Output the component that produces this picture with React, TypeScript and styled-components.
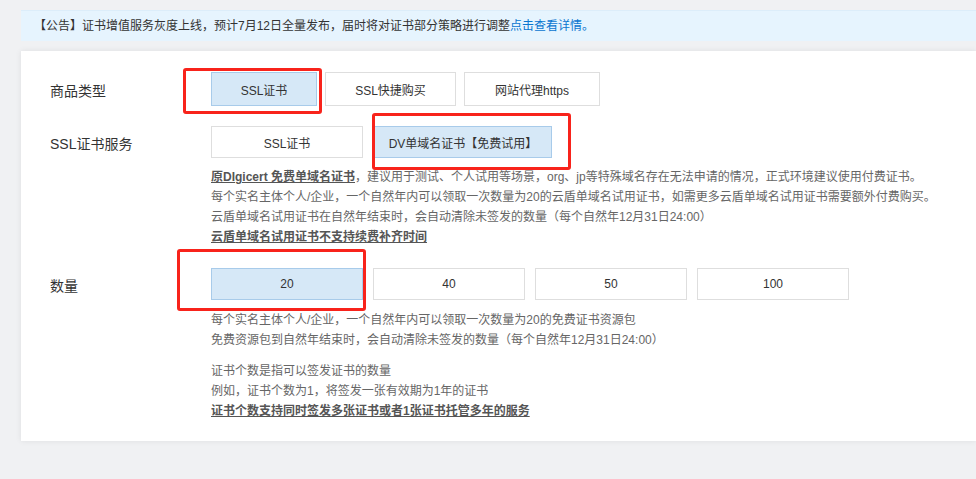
import React from 'react';
import styled, { createGlobalStyle } from 'styled-components';

const GlobalStyle = createGlobalStyle`
  html, body {
    margin: 0;
    padding: 0;
    background: #f0f1f3;
    overflow: hidden;
  }
  body {
    font-family: "Liberation Sans", "Noto Sans CJK SC", sans-serif;
    color: #333;
  }
`;

const Page = styled.div`
  padding: 10px 0 40px 21px;
`;

const Notice = styled.div`
  height: 31px;
  line-height: 31px;
  padding-left: 13px;
  background: #e6f4fe;
  border-top: 1px solid #dcedfa;
  box-sizing: border-box;
  font-size: 12px;
  color: #333;
  white-space: nowrap;
  overflow: hidden;
  a {
    color: #0a76d0;
    text-decoration: none;
  }
`;

const Card = styled.div`
  margin-top: 10px;
  padding: 21px 0 20px 29px;
  background: #fff;
  box-shadow: 0 0 6px rgba(0, 0, 0, 0.08);
  overflow: hidden;
`;

const Row = styled.div<{ $gap?: number }>`
  display: flex;
  align-items: flex-start;
  margin-top: ${({ $gap }) => ($gap ?? 0)}px;
`;

const Label = styled.div<{ $h: number }>`
  width: 161px;
  flex: none;
  height: ${({ $h }) => $h}px;
  line-height: ${({ $h }) => $h + 4}px;
  font-size: 14px;
  color: #333;
`;

const Field = styled.div`
  display: flex;
  flex-direction: column;
  min-width: 0;
`;

const Options = styled.div<{ $gap: number }>`
  display: flex;
  gap: ${({ $gap }) => $gap}px;
  padding-top: 20px;
  margin-top: -20px;
  padding-left: 40px;
  margin-left: -40px;
  padding-bottom: 14px;
  margin-bottom: -14px;
  padding-right: 20px;
`;

const Slot = styled.div`
  position: relative;
`;

const Option = styled.button<{ $active?: boolean; $w: number; $h: number }>`
  display: block;
  box-sizing: border-box;
  width: ${({ $w }) => $w}px;
  height: ${({ $h }) => $h}px;
  padding: 0;
  font-family: inherit;
  font-size: 12px;
  color: #333;
  background: ${({ $active }) => ($active ? '#d6e8f7' : '#fff')};
  border: 1px solid ${({ $active }) => ($active ? '#a8cbea' : '#dedede')};
  cursor: pointer;
`;

const Mark = styled.span<{ $t: number; $r: number; $b: number; $l: number }>`
  position: absolute;
  top: ${({ $t }) => $t}px;
  right: ${({ $r }) => $r}px;
  bottom: ${({ $b }) => $b}px;
  left: ${({ $l }) => $l}px;
  border: 3px solid #f8231b;
  border-radius: 3px;
  pointer-events: none;
`;

const Desc = styled.div<{ $top: number }>`
  margin-top: ${({ $top }) => $top}px;
  font-size: 12px;
  line-height: 20px;
  color: #666;
  white-space: nowrap;
`;

const Strong = styled.span`
  font-weight: bold;
  color: #555;
  text-decoration: underline;
`;

type Opt = { text: string; w: number; active?: boolean; mark?: [number, number, number, number] };

const OptionGroup: React.FC<{ items: Opt[]; h: number; gap: number }> = ({ items, h, gap }) => (
  <Options $gap={gap}>
    {items.map((o) => (
      <Slot key={o.text}>
        <Option $active={o.active} $w={o.w} $h={h}>
          {o.text}
        </Option>
        {o.mark && <Mark $t={o.mark[0]} $r={o.mark[1]} $b={o.mark[2]} $l={o.mark[3]} />}
      </Slot>
    ))}
  </Options>
);

const App: React.FC = () => {
  return (
    <>
      <GlobalStyle />
      <Page>
        <Notice>
          【公告】证书增值服务灰度上线，预计7月12日全量发布，届时将对证书部分策略进行调整<a href="#">点击查看详情。</a>
        </Notice>
        <Card>
          <Row>
            <Label $h={34}>商品类型</Label>
            <OptionGroup
              h={34}
              gap={8}
              items={[
                { text: 'SSL证书', w: 106, active: true, mark: [-4, -5, -8, -28] },
                { text: 'SSL快捷购买', w: 131 },
                { text: '网站代理https', w: 136 },
              ]}
            />
          </Row>
          <Row $gap={20}>
            <Label $h={32}>SSL证书服务</Label>
            <Field>
              <OptionGroup
                h={32}
                gap={11}
                items={[
                  { text: 'SSL证书', w: 152 },
                  { text: 'DV单域名证书【免费试用】', w: 178, active: true, mark: [-13, -19, -12, -2] },
                ]}
              />
              <Desc $top={9}>
                <div>
                  <Strong>原DIgicert 免费单域名证书</Strong>，建议用于测试、个人试用等场景，org、jp等特殊域名存在无法申请的情况，正式环境建议使用付费证书。
                </div>
                <div>每个实名主体个人/企业，一个自然年内可以领取一次数量为20的云盾单域名试用证书，如需更多云盾单域名试用证书需要额外付费购买。</div>
                <div>云盾单域名试用证书在自然年结束时，会自动清除未签发的数量（每个自然年12月31日24:00）</div>
                <div>
                  <Strong>云盾单域名试用证书不支持续费补齐时间</Strong>
                </div>
              </Desc>
            </Field>
          </Row>
          <Row $gap={21}>
            <Label $h={32}>数量</Label>
            <Field>
              <OptionGroup
                h={32}
                gap={10}
                items={[
                  { text: '20', w: 152, active: true, mark: [-19, -3, -11, -34] },
                  { text: '40', w: 152 },
                  { text: '50', w: 152 },
                  { text: '100', w: 152 },
                ]}
              />
              <Desc $top={10}>
                <div>每个实名主体个人/企业，一个自然年内可以领取一次数量为20的免费证书资源包</div>
                <div>免费资源包到自然年结束时，会自动清除未签发的数量（每个自然年12月31日24:00）</div>
              </Desc>
              <Desc $top={11}>
                <div>证书个数是指可以签发证书的数量</div>
                <div>例如，证书个数为1，将签发一张有效期为1年的证书</div>
                <div>
                  <Strong>证书个数支持同时签发多张证书或者1张证书托管多年的服务</Strong>
                </div>
              </Desc>
            </Field>
          </Row>
        </Card>
      </Page>
    </>
  );
};

export default App;
